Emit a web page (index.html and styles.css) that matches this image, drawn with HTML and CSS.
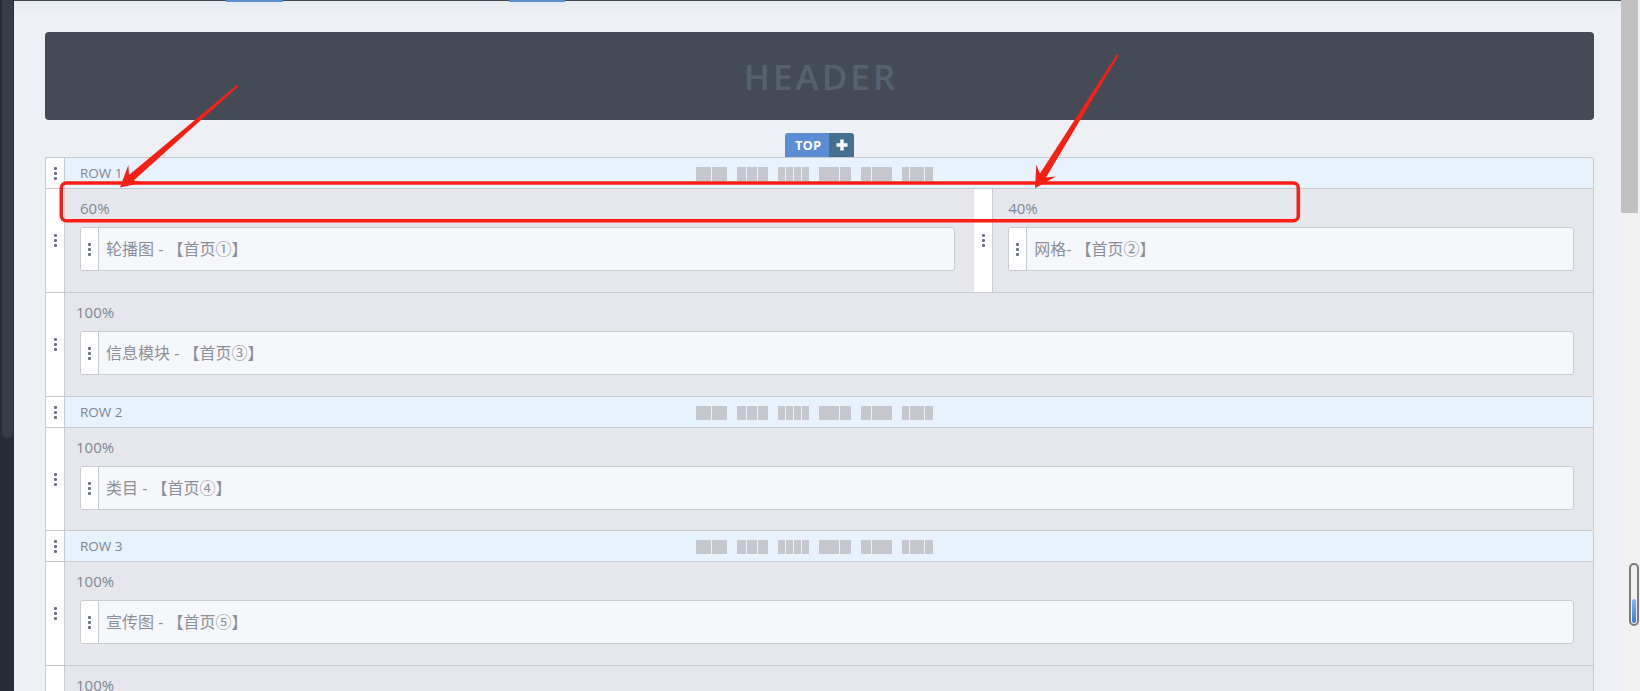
FILE: index.html
```html
<!DOCTYPE html>
<html lang="zh-CN">
<head>
    <meta charset="UTF-8">
    <meta name="viewport" content="width=device-width, initial-scale=1.0">
    <title>页面布局</title>
    <link rel="stylesheet" href="styles.css">
</head>
<body>

<div class="app">
    <div class="side"><div class="side-thumb"></div></div>

    <div class="main">
        <div class="topbar">
            <span class="mark mark-a"></span>
            <span class="mark mark-b"></span>
        </div>

        <div class="header">HEADER</div>

        <div class="tab-line">
            <div class="tab">
                <span class="tab-name">TOP</span>
                <span class="tab-add">
                    <svg width="12" height="12" viewBox="0 0 12 12"><path d="M6 0.5v11M0.5 6h11" stroke="#fff" stroke-width="3.4"/></svg>
                </span>
            </div>
        </div>

        <!-- ROW 1 -->
        <div class="row">
            <div class="row-head">
                <div class="grip"><i></i><i></i><i></i></div>
                <span class="row-name">ROW 1</span>
                <div class="tools">
                    <span class="tool"><b class="s15"></b><b class="s15"></b></span>
                    <span class="tool"><b class="s9"></b><b class="s10"></b><b class="s10"></b></span>
                    <span class="tool"><b class="s7"></b><b class="s7"></b><b class="s7"></b><b class="s7"></b></span>
                    <span class="tool"><b class="s20"></b><b class="s11"></b></span>
                    <span class="tool"><b class="s10"></b><b class="s20"></b></span>
                    <span class="tool"><b class="s7"></b><b class="s14"></b><b class="s8"></b></span>
                </div>
            </div>
            <div class="band">
                <div class="col w60">
                    <div class="grip"><i></i><i></i><i></i></div>
                    <div class="col-body">
                        <div class="pct">60%</div>
                        <div class="widget"><div class="grip"><i></i><i></i><i></i></div><span>轮播图 - 【首页①】</span></div>
                    </div>
                </div>
                <div class="col w40">
                    <div class="grip"><i></i><i></i><i></i></div>
                    <div class="col-body">
                        <div class="pct">40%</div>
                        <div class="widget"><div class="grip"><i></i><i></i><i></i></div><span>网格- 【首页②】</span></div>
                    </div>
                </div>
            </div>
            <div class="band">
                <div class="col w100">
                    <div class="grip"><i></i><i></i><i></i></div>
                    <div class="col-body">
                        <div class="pct pct-full">100%</div>
                        <div class="widget"><div class="grip"><i></i><i></i><i></i></div><span>信息模块 - 【首页③】</span></div>
                    </div>
                </div>
            </div>
        </div>

        <!-- ROW 2 -->
        <div class="row">
            <div class="row-head">
                <div class="grip"><i></i><i></i><i></i></div>
                <span class="row-name">ROW 2</span>
                <div class="tools">
                    <span class="tool"><b class="s15"></b><b class="s15"></b></span>
                    <span class="tool"><b class="s9"></b><b class="s10"></b><b class="s10"></b></span>
                    <span class="tool"><b class="s7"></b><b class="s7"></b><b class="s7"></b><b class="s7"></b></span>
                    <span class="tool"><b class="s20"></b><b class="s11"></b></span>
                    <span class="tool"><b class="s10"></b><b class="s20"></b></span>
                    <span class="tool"><b class="s7"></b><b class="s14"></b><b class="s8"></b></span>
                </div>
            </div>
            <div class="band band-short">
                <div class="col w100">
                    <div class="grip"><i></i><i></i><i></i></div>
                    <div class="col-body">
                        <div class="pct pct-full">100%</div>
                        <div class="widget"><div class="grip"><i></i><i></i><i></i></div><span>类目 - 【首页④】</span></div>
                    </div>
                </div>
            </div>
        </div>

        <!-- ROW 3 -->
        <div class="row">
            <div class="row-head">
                <div class="grip"><i></i><i></i><i></i></div>
                <span class="row-name">ROW 3</span>
                <div class="tools">
                    <span class="tool"><b class="s15"></b><b class="s15"></b></span>
                    <span class="tool"><b class="s9"></b><b class="s10"></b><b class="s10"></b></span>
                    <span class="tool"><b class="s7"></b><b class="s7"></b><b class="s7"></b><b class="s7"></b></span>
                    <span class="tool"><b class="s20"></b><b class="s11"></b></span>
                    <span class="tool"><b class="s10"></b><b class="s20"></b></span>
                    <span class="tool"><b class="s7"></b><b class="s14"></b><b class="s8"></b></span>
                </div>
            </div>
            <div class="band">
                <div class="col w100">
                    <div class="grip"><i></i><i></i><i></i></div>
                    <div class="col-body">
                        <div class="pct pct-full">100%</div>
                        <div class="widget"><div class="grip"><i></i><i></i><i></i></div><span>宣传图 - 【首页⑤】</span></div>
                    </div>
                </div>
            </div>
            <div class="band">
                <div class="col w100">
                    <div class="grip"><i></i><i></i><i></i></div>
                    <div class="col-body">
                        <div class="pct pct-full">100%</div>
                        <div class="widget"><div class="grip"><i></i><i></i><i></i></div><span>商品 - 【首页⑥】</span></div>
                    </div>
                </div>
            </div>
        </div>
    </div>

    <div class="vscroll">
        <div class="vthumb"></div>
        <div class="scroll-pill"><i></i></div>
    </div>
</div>

<!-- red annotation drawn over the screenshot -->
<svg class="notes" width="1640" height="691" viewBox="0 0 1640 691">
    <rect x="61.3" y="183" width="1237" height="37.7" rx="5" fill="none" stroke="#fa1e14" stroke-width="3.6"/>
    <g transform="translate(120 187.5) rotate(-40.9)">
        <polygon points="0,0 21,-11.5 15,-3.6 155.5,-1 155.5,1 15,3.6 21,11.5" fill="#fa1e14"/>
    </g>
    <g transform="translate(1035 188.3) rotate(-58.2)">
        <polygon points="0,0 21,-11.5 15,-3.6 156.9,-1 156.9,1 15,3.6 21,11.5" fill="#fa1e14"/>
    </g>
</svg>

</body>
</html>
```

FILE: styles.css
```css
* {
    margin: 0;
    padding: 0;
    box-sizing: border-box;
}

html, body {
    width: 100%;
    height: 100%;
    overflow: hidden;
}

body {
    position: relative;
    font-family: "Open Sans", "Noto Sans CJK SC", sans-serif;
    background: #edf1f5;
}

.app {
    display: flex;
    height: 100%;
}

/* dark strip on the far left */
.side {
    width: 14px;
    flex: none;
    background: #262c36;
    padding: 0 1px 0 2px;
}

.side-thumb {
    height: 438px;
    background: #363d49;
    border-radius: 0 0 5px 5px;
}

.main {
    flex: 1;
    min-width: 0;
    background: #edf1f5;
    padding: 0 27px 0 31px;
    overflow: hidden;
}

.topbar {
    display: flex;
    height: 1px;
    margin: 0 -29px 0 -31px;
    background: #3f4551;
    box-shadow: 0 2px 12px rgba(40, 48, 60, 0.35);
}

.mark {
    width: 57px;
    height: 2px;
    flex: none;
    background: #5b8fd0;
}

.mark-a { margin-left: 212px; }
.mark-b { margin-left: 226px; width: 56px; }

.header {
    margin-top: 31px;
    height: 88px;
    background: #444b57;
    border-radius: 4px;
    display: flex;
    align-items: center;
    justify-content: center;
    font-size: 35px;
    font-weight: 600;
    letter-spacing: 3px;
    padding-left: 3px;
    color: #56616f;
}

.tab-line {
    display: flex;
    justify-content: center;
    margin-top: 13px;
}

.tab {
    display: flex;
    height: 24px;
    border-radius: 3px 3px 0 0;
    overflow: hidden;
}

.tab-name {
    width: 44px;
    padding-left: 10px;
    background: #5a8dd2;
    color: #fff;
    font-size: 13px;
    font-weight: 700;
    line-height: 24px;
}

.tab-add {
    width: 25px;
    background: #46708f;
    display: flex;
    align-items: center;
    justify-content: center;
}

/* rows */
.row {
    background: #e6e7ec;
    border: 1px solid #c8cad3;
    border-bottom: none;
    border-radius: 0 4px 0 0;
    overflow: hidden;
}

.row-head {
    display: flex;
    height: 31px;
    background: #e8f2fc;
    border-bottom: 1px solid #c8cad3;
}

.grip {
    width: 19px;
    flex: none;
    background: #fff;
    border-right: 1px solid #c8cad3;
    display: flex;
    flex-direction: column;
    align-items: center;
    justify-content: center;
    gap: 2px;
}

.grip i {
    width: 3px;
    height: 3px;
    border-radius: 1px;
    background: #6b7385;
}

.row-name {
    width: 631px;
    flex: none;
    padding-left: 15px;
    font-size: 13.5px;
    line-height: 30px;
    color: #7b8595;
}

.tools {
    display: flex;
    gap: 10px;
    margin-top: 9px;
}

.tool {
    display: flex;
    gap: 1px;
    height: 14px;
}

.tool b { background: #c5c6ce; }
.s7 { width: 7px; }
.s8 { width: 8px; }
.s9 { width: 9px; }
.s10 { width: 10px; }
.s11 { width: 11px; }
.s14 { width: 14px; }
.s15 { width: 15px; }
.s20 { width: 20px; }

.band {
    display: flex;
}

.band + .band {
    border-top: 1px solid #c8cad3;
}

.col {
    display: flex;
}

.w60 { width: 60%; }
.w40 { width: 40%; }
.w100 { width: 100%; }

.col-body {
    flex: 1;
    min-width: 0;
    padding: 9px 19px 21px 15px;
}

.band-short .col-body {
    padding-bottom: 20px;
}

.pct {
    font-size: 15px;
    line-height: 20px;
    margin-bottom: 9px;
    color: #7f8895;
}

.pct-full {
    margin-left: -4px;
}

.widget {
    display: flex;
    height: 44px;
    background: #f5f7fb;
    border: 1px solid #c9cbd3;
    border-radius: 3px;
    overflow: hidden;
}

.widget .grip {
    width: 18px;
}

.widget span {
    padding-left: 7px;
    font-size: 16px;
    line-height: 42px;
    color: #8b8f99;
    white-space: nowrap;
}

/* fake browser scrollbar */
.vscroll {
    position: relative;
    width: 19px;
    flex: none;
    background: #f1f1f1;
}

.vthumb {
    width: 17px;
    height: 213px;
    background: #c1c1c1;
}

.scroll-pill {
    position: absolute;
    left: 8px;
    top: 563px;
    width: 10px;
    height: 63px;
    border: 2px solid #7a7a7a;
    border-radius: 5px;
}

.scroll-pill i {
    position: absolute;
    left: 1px;
    bottom: 1px;
    width: 4px;
    height: 24px;
    border-radius: 2px;
    background: linear-gradient(#7fb8ff, #2f7cf0);
}

.notes {
    position: absolute;
    top: 0;
    left: 0;
    pointer-events: none;
}
```
